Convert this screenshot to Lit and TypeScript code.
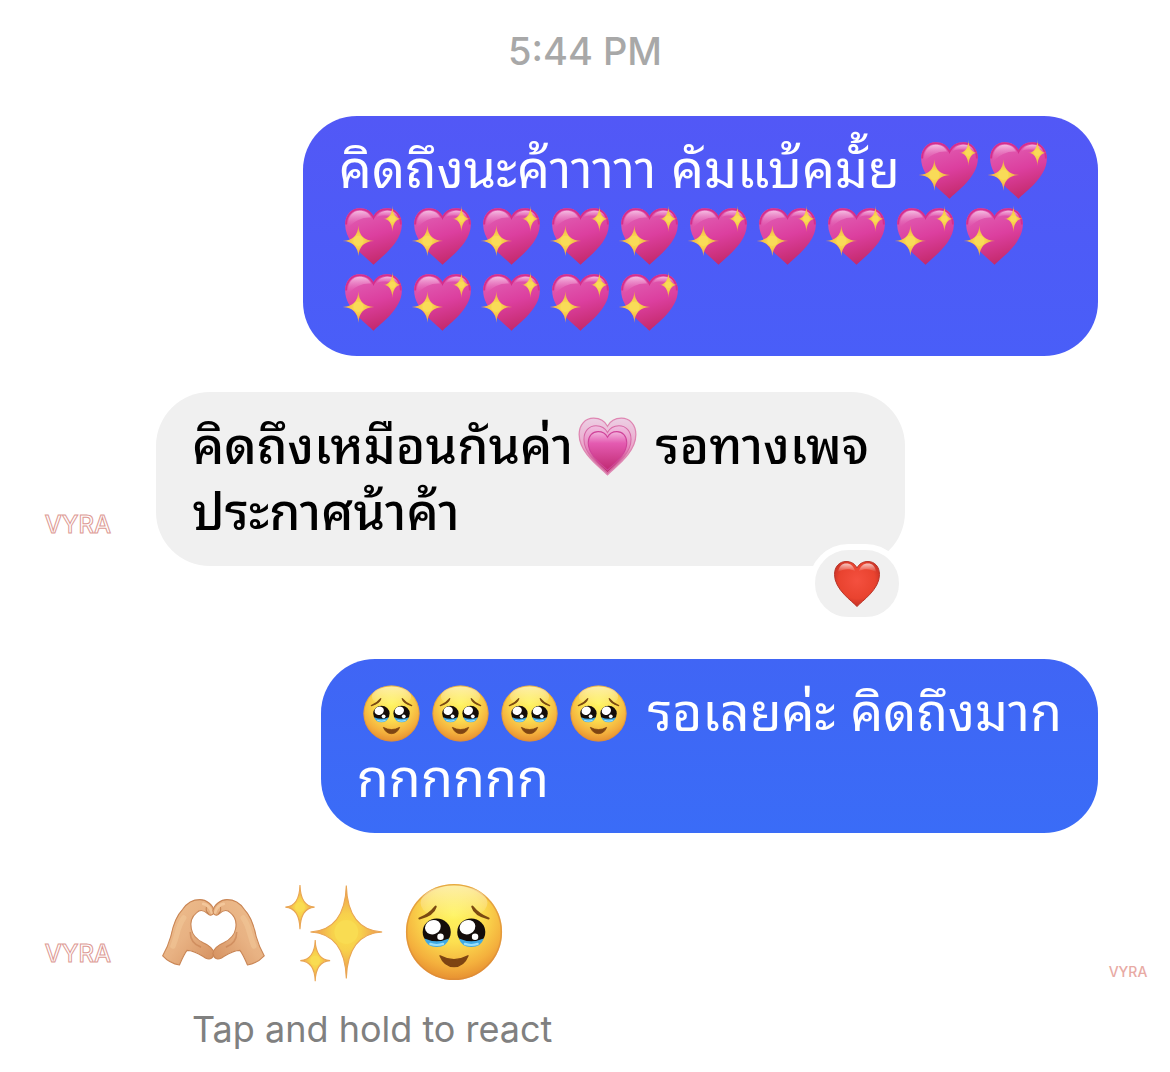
import { LitElement, html, css, svg } from "lit";
import { customElement, property } from "lit/decorators.js";

const HEART =
  "M50 95 C40 84 5 61 5 31 C5 15 15 5 28 5 C39 5 46 10 50 18 C54 10 61 5 72 5 C85 5 95 15 95 31 C95 61 60 84 50 95Z";

/** Four-pointed star with deeply concave sides. */
const star = (cx: number, cy: number, rx: number, ry: number) => {
  const a = rx * 0.04;
  const b = ry * 0.04;
  return `M${cx} ${cy - ry} Q${cx + a} ${cy - b} ${cx + rx} ${cy} Q${cx + a} ${cy + b} ${cx} ${cy + ry} Q${cx - a} ${cy + b} ${cx - rx} ${cy} Q${cx - a} ${cy - b} ${cx} ${cy - ry}Z`;
};

const goldDefs = svg`
  <radialGradient id="gold">
    <stop offset="0" stop-color="#fbe04a" />
    <stop offset="0.4" stop-color="#f7d04c" />
    <stop offset="1" stop-color="#ec9350" />
  </radialGradient>`;

const hand = svg`
  <path d="M2.500 72 C6 66 8 61 10 54 C12 44 15 35 21 29 C25 23 31 20 37 20 C43 20 49 25 50 30 C50 34 47 36 44 33 C41 30 37 29 34 32 C29 36 28 42 29 47 C30 53 34 57 40 60 C45 62 50 66 50 70 C49 75 46 76 42 74 C37 71 32 67 25 67 C22 71 20 76 18 80.500 Q9 79 2.500 72Z"
    fill="url(#skin)" stroke="#c98554" stroke-width="1" />
  <path d="M22 37 C16 45 16 54 12 63" fill="none" stroke="#f5cfa1" stroke-width="5" stroke-linecap="round" opacity="0.4" />
  <path d="M28 50 C28 58 32 62 38 64" fill="none" stroke="#c47f50" stroke-width="1.500" opacity="0.6" />
  <path d="M40 24 Q46 25 48 32" fill="none" stroke="#f6cfa4" stroke-width="2.500" stroke-linecap="round" opacity="0.7" />
  <path d="M43 27 Q42 31 45 33" fill="none" stroke="#b8703f" stroke-width="1" opacity="0.7" />`;

const eye = (x: number) => svg`
  <ellipse cx=${x} cy="50" rx="13" ry="12.500" fill="#140d0a" />
  <path d="M${x - 11.5} 56 Q${x} 61 ${x + 11.5} 56 Q${x + 9} 64 ${x} 64 Q${x - 9} 64 ${x - 11.5} 56Z" fill="#3fa9e4" />
  <path d="M${x - 6} 61 Q${x} 63 ${x + 6} 61" fill="none" stroke="#9be0fa" stroke-width="2" stroke-linecap="round" />
  <ellipse cx=${x - 3.5} cy="45.500" rx="7.500" ry="6.500" fill="#fff" transform="rotate(-25 ${x - 3.5} 45.500)" />
  <circle cx=${x + 3.5} cy="54.500" r="3" fill="#fff" />`;

const ART: Record<string, { label: string; art: unknown }> = {
  sparkling: {
    label: "💖",
    art: svg`
      <defs>
        ${goldDefs}
        <linearGradient id="pink" x1="0.3" y1="0" x2="0.6" y2="1">
          <stop offset="0" stop-color="#e160b4" />
          <stop offset="0.5" stop-color="#dc3f9f" />
          <stop offset="1" stop-color="#c22868" />
        </linearGradient>
        <linearGradient id="gloss" x1="0" y1="0" x2="0" y2="1">
          <stop offset="0" stop-color="#f8cdea" stop-opacity="0.85" />
          <stop offset="1" stop-color="#e765b8" stop-opacity="0" />
        </linearGradient>
      </defs>
      <path d=${HEART} fill="url(#pink)" />
      <path d="M6.500 31 C6.500 16 16 6.500 28 6.500 C39 6.500 46 11 50 20 C54 11 61 6.500 72 6.500 C84 6.500 93.500 16 93.500 31" fill="none" stroke="#d52e8c" stroke-width="3" />
      <path d="M10 36 C8 18 17 9 28 9 C37 9 43 13 46 20 C34 19 20 24 10 36Z" fill="url(#gloss)" />
      <path d="M55 19 C59 11 66 9 73 9 C82 9 89 14 90 23 C80 16 66 15 55 19Z" fill="url(#gloss)" />
      <path d=${star(26, 57, 25, 25)} fill="url(#gold)" />
      <path d=${star(80, 22, 15, 21)} fill="url(#gold)" />
      <circle cx="26" cy="57" r="8" fill="#f9db58" />
      <circle cx="80" cy="22" r="5" fill="#f9db58" />`,
  },
  growing: {
    label: "💗",
    art: svg`
      <defs>
        <linearGradient id="outer" x1="0" y1="0" x2="0" y2="1">
          <stop offset="0" stop-color="#ecd0e4" />
          <stop offset="0.5" stop-color="#eba6cb" />
          <stop offset="1" stop-color="#c96d92" />
        </linearGradient>
        <linearGradient id="mid" x1="0" y1="0" x2="0" y2="1">
          <stop offset="0" stop-color="#f0bfe0" />
          <stop offset="0.5" stop-color="#e680bb" />
          <stop offset="1" stop-color="#b52a62" />
        </linearGradient>
        <linearGradient id="core" x1="0" y1="0" x2="0" y2="1">
          <stop offset="0" stop-color="#f2b5dd" />
          <stop offset="0.3" stop-color="#e45bb1" />
          <stop offset="1" stop-color="#c02a72" />
        </linearGradient>
      </defs>
      <path d=${HEART} fill="url(#outer)" stroke="#df86b2" stroke-width="2" />
      <path d=${HEART} transform="translate(8.500 13) scale(0.830)" fill="url(#mid)" stroke="#d76aa6" stroke-width="2" />
      <path d=${HEART} transform="translate(16 23) scale(0.680)" fill="url(#core)" stroke="#d0439a" stroke-width="2.500" />`,
  },
  red: {
    label: "❤️",
    art: svg`
      <defs>
        <radialGradient id="red" cx="0.5" cy="0.42" r="0.62">
          <stop offset="0" stop-color="#f4503f" />
          <stop offset="0.65" stop-color="#e9432f" />
          <stop offset="1" stop-color="#bc2b22" />
        </radialGradient>
        <linearGradient id="shine" x1="0" y1="0" x2="0" y2="1">
          <stop offset="0" stop-color="#fff" stop-opacity="0.7" />
          <stop offset="1" stop-color="#fff" stop-opacity="0" />
        </linearGradient>
      </defs>
      <path d=${HEART} fill="url(#red)" stroke="#b9372b" stroke-width="2" />
      <path d="M12 26 C14 14 21 9 28 9 C38 9 43 14 46 24 C34 18 22 20 12 26Z" fill="url(#shine)" />
      <path d="M54 24 C57 14 63 9 72 9 C80 9 87 14 88 26 C78 20 66 18 54 24Z" fill="url(#shine)" />`,
  },
  tearful: {
    label: "🥹",
    art: svg`
      <defs>
        <radialGradient id="face" cx="0.5" cy="0.32" r="0.72">
          <stop offset="0" stop-color="#fff45f" />
          <stop offset="0.4" stop-color="#fcdf50" />
          <stop offset="0.75" stop-color="#f4b03d" />
          <stop offset="1" stop-color="#e2852d" />
        </radialGradient>
        <linearGradient id="top" x1="0" y1="0" x2="0" y2="1">
          <stop offset="0" stop-color="#fff" stop-opacity="0.5" />
          <stop offset="1" stop-color="#fff" stop-opacity="0" />
        </linearGradient>
      </defs>
      <circle cx="50" cy="50" r="44.500" fill="url(#face)" />
      <circle cx="50" cy="50" r="43.800" fill="none" stroke="#d9893a" stroke-width="1.400" opacity="0.6" />
      <ellipse cx="50" cy="23" rx="31" ry="16" fill="url(#top)" />
      ${eye(34)}${eye(66)}
      <path d="M18 37.500 Q27 34 33 26.500 Q31 34 18 37.500Z M82 37.500 Q73 34 67 26.500 Q69 34 82 37.500Z"
        fill="#7b4a12" stroke="#7b4a12" stroke-width="2" stroke-linejoin="round" />
      <path d="M37 72 Q50 79 63 72 Q59 82 50 82 Q41 82 37 72Z" fill="#7e4412" stroke="#7e4412" stroke-width="1.200" stroke-linejoin="round" />`,
  },
  sparkles: {
    label: "✨",
    art: svg`
      <defs>${goldDefs}</defs>
      <g fill="url(#gold)" stroke="#e9a553" stroke-width="1">
        <path d=${star(61.4, 50, 33.2, 43)} />
        <path d=${star(18.5, 27, 13.5, 20.5)} />
        <path d=${star(32.6, 76.5, 13.8, 19)} />
      </g>
      <circle cx="61.400" cy="50" r="11" fill="#f9dc52" />
      <circle cx="18.500" cy="27" r="4.500" fill="#f9dc52" />
      <circle cx="32.600" cy="76.500" r="4.500" fill="#f9dc52" />`,
  },
  hands: {
    label: "🫶🏼",
    art: svg`
      <defs>
        <linearGradient id="skin" x1="0" y1="0" x2="1" y2="1">
          <stop offset="0" stop-color="#efc08f" />
          <stop offset="0.5" stop-color="#e8b283" />
          <stop offset="1" stop-color="#d48f5e" />
        </linearGradient>
      </defs>
      <g>${hand}</g>
      <g transform="translate(99 0) scale(-1 1)">${hand}</g>`,
  },
};

@customElement("chat-emoji")
class ChatEmoji extends LitElement {
  @property() name = "red";

  static styles = css`
    :host {
      display: inline-block;
      width: 63px;
      height: 63px;
      margin: 0 3px;
      vertical-align: -14px;
    }
    .art {
      display: block;
      width: 100%;
      height: 100%;
    }
  `;

  render() {
    const { label, art } = ART[this.name];
    return html`<svg class="art" viewBox="0 0 100 100" role="img" aria-label=${label}>${art}</svg>`;
  }
}

const emoji = (name: string, count = 1) =>
  Array.from({ length: count }, () => html`<chat-emoji name=${name}></chat-emoji>`);

@customElement("app-root")
class AppRoot extends LitElement {
  static styles = css`
    :host {
      display: block;
      background: #fff;
      font-family: Inter, "Noto Sans Thai Looped", Thonburi, Loma, Waree, Garuda, "Noto Sans Thai", "Noto Sans", sans-serif;
    }
    .thread {
      display: flex;
      flex-direction: column;
      padding: 27px 0 19px;
    }
    .time {
      margin: 0 0 41px;
      text-align: center;
      font-size: 38px;
      line-height: 48px;
      font-weight: 500;
      color: #a8a8a8;
    }
    .row {
      display: flex;
      align-items: flex-end;
      margin-bottom: 36px;
    }
    .sent {
      justify-content: flex-end;
      padding: 0 72px;
    }
    .received {
      gap: 36px;
      padding: 0 18px 0 36px;
    }
    .reacted {
      margin-bottom: 93px;
    }
    .last {
      margin-bottom: 10px;
    }
    .bubble {
      position: relative;
      box-sizing: border-box;
      padding: 21px 36px;
      border-radius: 54px;
      font-size: 52px;
      line-height: 66px;
      white-space: nowrap;
    }
    .bubble p {
      margin: 0;
    }
    .violet {
      min-width: 77.5%;
      background: linear-gradient(#5258f6, #495ef8);
      color: #fff;
    }
    .blue {
      min-width: 75%;
      background: linear-gradient(#4065f5, #3a6cf7);
      color: #fff;
    }
    .gray {
      min-width: 67%;
      background: #f0f0f0;
      color: #000;
      font-size: 50px;
      font-weight: 500;
    }
    .reaction {
      position: absolute;
      right: 0;
      bottom: -57px;
      display: flex;
      align-items: center;
      justify-content: center;
      box-sizing: border-box;
      width: 96px;
      height: 79px;
      padding: 0;
      border: 6px solid #fff;
      border-radius: 40px;
      background: #f0f0f0;
    }
    .reaction chat-emoji {
      width: 50px;
      height: 50px;
      margin: 0;
    }
    .avatar {
      display: flex;
      align-items: center;
      justify-content: center;
      flex: none;
      width: 84px;
      height: 84px;
      border-radius: 50%;
      background: #fff;
      font-size: 24px;
      font-weight: 500;
      color: #fff;
      -webkit-text-stroke: 1px #dd9a94;
    }
    .seen {
      width: 48px;
      height: 48px;
      margin-left: auto;
      font-size: 14px;
      color: #e8aaa4;
      -webkit-text-stroke: 0;
    }
    .stickers {
      display: flex;
      align-items: center;
      gap: 12px;
      height: 126px;
      padding-left: 4px;
    }
    .stickers chat-emoji {
      width: 108px;
      height: 108px;
      margin: 0;
    }
    .hint {
      margin: 0;
      padding-left: 192px;
      font-size: 36px;
      line-height: 48px;
      color: #808080;
    }
  `;

  render() {
    return html`
      <main class="thread">
        <p class="time">5:44 PM</p>

        <div class="row sent">
          <div class="bubble violet">
            <p>คิดถึงนะค้าาาาา คัมแบ้คมั้ย ${emoji("sparkling", 2)}</p>
            <p>${emoji("sparkling", 10)}</p>
            <p>${emoji("sparkling", 5)}</p>
          </div>
        </div>

        <div class="row received reacted">
          <div class="avatar">VYRA</div>
          <div class="bubble gray">
            <p>คิดถึงเหมือนกันค่า${emoji("growing")} รอทางเพจ</p>
            <p>ประกาศน้าค้า</p>
            <button class="reaction" aria-label="❤️">${emoji("red")}</button>
          </div>
        </div>

        <div class="row sent">
          <div class="bubble blue">
            <p>${emoji("tearful", 4)} รอเลยค่ะ คิดถึงมาก</p>
            <p>กกกกกก</p>
          </div>
        </div>

        <div class="row received last">
          <div class="avatar">VYRA</div>
          <div class="stickers">${emoji("hands")}${emoji("sparkles")}${emoji("tearful")}</div>
          <div class="avatar seen">VYRA</div>
        </div>
        <p class="hint">Tap and hold to react</p>
      </main>
    `;
  }
}
